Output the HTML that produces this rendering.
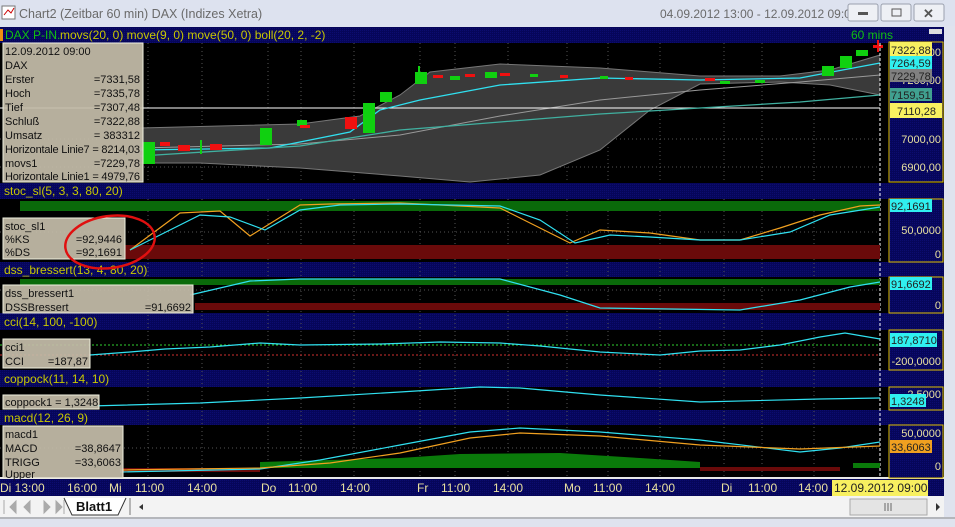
<!DOCTYPE html>
<html><head><meta charset="utf-8"><style>
body{margin:0;width:955px;height:527px;overflow:hidden;background:#dfe3ee;font-family:"Liberation Sans",sans-serif}
svg text{font-family:"Liberation Sans",sans-serif}
</style></head><body>
<svg width="955" height="527" xmlns="http://www.w3.org/2000/svg" style="position:absolute;left:0;top:0">
<defs>
<pattern id="nav" width="2" height="2" patternUnits="userSpaceOnUse"><rect width="2" height="2" fill="#06065a"/><rect width="1" height="1" fill="#0c0c70"/></pattern>
</defs>
<rect x="0" y="0" width="955" height="27" fill="#dde2ef"/>
<rect x="2" y="6" width="13" height="13" fill="#fff" stroke="#777"/>
<path d="M4 15 L8 10 L11 13 L14 8" stroke="#c00" fill="none"/>
<text x="19" y="18" font-size="12.5" fill="#6a6a6a">Chart2 (Zeitbar 60 min)  DAX (Indizes Xetra)</text>
<text x="660" y="18" font-size="12" fill="#6a6a6a">04.09.2012 13:00 - 12.09.2012 09:00</text>
<g fill="#eef0f5" stroke="#9aa0ae"><rect x="848" y="4" width="30" height="17" rx="2"/><rect x="881" y="4" width="30" height="17" rx="2"/><rect x="914" y="4" width="30" height="17" rx="2"/></g>
<rect x="858" y="12" width="10" height="3" fill="#555"/><rect x="892" y="9" width="9" height="7" fill="none" stroke="#555"/>
<text x="923" y="18" font-size="13" fill="#555" font-weight="bold">✕</text>
<rect x="944" y="26" width="11" height="501" fill="#dfe3ee"/>
<rect x="0" y="27" width="944" height="469" fill="#000"/>
<rect x="0" y="27" width="944" height="16" fill="url(#nav)"/>
<rect x="0" y="183" width="944" height="16" fill="url(#nav)"/>
<rect x="0" y="262" width="944" height="15" fill="url(#nav)"/>
<rect x="0" y="313" width="944" height="17" fill="url(#nav)"/>
<rect x="0" y="370" width="944" height="17" fill="url(#nav)"/>
<rect x="0" y="410" width="944" height="15" fill="url(#nav)"/>
<rect x="0" y="478" width="944" height="18" fill="url(#nav)"/>
<rect x="0" y="477" width="944" height="2" fill="#e8e8e8"/>
<g fill="url(#nav)" stroke="#e0c000">
<rect x="889" y="42" width="54" height="140"/>
<rect x="889" y="199" width="54" height="63"/>
<rect x="889" y="277" width="54" height="36"/>
<rect x="889" y="330" width="54" height="40"/>
<rect x="889" y="387" width="54" height="23"/>
<rect x="889" y="425" width="54" height="53"/>
</g>
<rect x="929" y="29" width="13" height="5" fill="#ddd"/>
<g stroke="#555" stroke-dasharray="1,3">
<path d="M148 43V183M202 43V183M268 43V183M301 43V183M354 43V183M420 43V183M455 43V183M508 43V183M567 43V183M608 43V183M660 43V183M724 43V183M762 43V183M814 43V183"/>
<path d="M148 199V478M202 199V478M268 199V478M301 199V478M354 199V478M420 199V478M455 199V478M508 199V478M567 199V478M608 199V478M660 199V478M724 199V478M762 199V478M814 199V478"/>
<path d="M0 139H880M0 167H880M0 232H880M0 448H880M0 290H880"/>
</g>
<path d="M140 128 L300 124 L360 116 L400 95 L430 72 L500 64 L600 68 L700 76 L780 76 L830 70 L880 55 L880 95 L830 85 L780 82 L700 84 L650 110 L600 150 L540 175 L470 182 L400 176 L300 168 L200 163 L140 163Z" fill="#3a3a3a"/>
<path d="M140 128 L300 124 L360 116 L400 95 L430 72 L500 64 L600 68 L700 76 L780 76 L830 70 L880 55" fill="none" stroke="#777"/>
<path d="M880 95 L830 85 L780 82 L700 84 L650 110 L600 150 L540 175 L470 182 L400 176 L300 168 L200 163 L140 163" fill="none" stroke="#777"/>
<path d="M140 148 L300 144 L400 135 L500 116 L600 100 L700 90 L800 82 L880 75" fill="none" stroke="#999"/>
<line x1="0" y1="108" x2="880" y2="108" stroke="#fff"/>
<path d="M140 150 L270 148 L350 132 L380 110 L420 100 L500 85 L600 78 L700 80 L800 78 L880 63" fill="none" stroke="#30e0f0" stroke-width="1.3"/>
<path d="M140 156 L300 146 L400 130 L500 122 L600 114 L700 108 L800 102 L880 95" fill="none" stroke="#40b0a0" stroke-width="1.3"/>
<g fill="#10d010">
<rect x="143" y="142" width="12" height="22"/><rect x="260" y="128" width="12" height="17"/><rect x="297" y="120" width="10" height="6"/><rect x="363" y="103" width="12" height="30"/><rect x="380" y="92" width="12" height="10"/><rect x="415" y="72" width="12" height="12"/><rect x="450" y="76" width="10" height="4"/><rect x="485" y="72" width="12" height="6"/><rect x="530" y="74" width="8" height="3"/><rect x="600" y="76" width="8" height="3"/><rect x="720" y="81" width="10" height="3"/><rect x="755" y="80" width="10" height="3"/><rect x="822" y="66" width="12" height="10"/><rect x="840" y="56" width="12" height="12"/><rect x="856" y="50" width="12" height="6"/>
<rect x="200" y="140" width="2" height="14"/><rect x="418" y="66" width="2" height="14"/>
</g>
<g fill="#f01010">
<rect x="160" y="142" width="10" height="4"/><rect x="178" y="145" width="12" height="6"/><rect x="210" y="144" width="12" height="6"/><rect x="345" y="117" width="12" height="12"/><rect x="300" y="125" width="10" height="3"/><rect x="433" y="75" width="10" height="3"/><rect x="465" y="74" width="10" height="3"/><rect x="500" y="73" width="10" height="3"/><rect x="560" y="75" width="8" height="3"/><rect x="625" y="77" width="8" height="3"/><rect x="705" y="78" width="10" height="3"/><rect x="873" y="45" width="10" height="3"/><rect x="877" y="40" width="2" height="12"/>
</g>
<line x1="880" y1="43" x2="880" y2="478" stroke="#fff" stroke-dasharray="3,2"/>
<rect x="0" y="29" width="3" height="12" fill="#f09010"/>
<text x="5" y="39" font-size="12" fill="#10c010">DAX P-IN.</text>
<text x="60" y="39" font-size="12" fill="#c8c800">movs(20, 0) move(9, 0) move(50, 0) boll(20, 2, -2)</text>
<text x="851" y="39" font-size="12" fill="#10c010">60 mins</text>
<g font-size="12" fill="#c8c800">
<text x="4" y="195">stoc_sl(5, 3, 3, 80, 20)</text>
<text x="4" y="274">dss_bressert(13, 4, 80, 20)</text>
<text x="4" y="326">cci(14, 100, -100)</text>
<text x="4" y="383">coppock(11, 14, 10)</text>
<text x="4" y="422">macd(12, 26, 9)</text>
</g>
<rect x="20" y="201" width="860" height="10" fill="#0a6a0a"/>
<rect x="125" y="245" width="755" height="14" fill="#6a0a0a"/>
<path d="M130 250 L180 213 L220 211 L250 236 L300 205 L330 204 L400 203 L500 208 L540 228 L570 243 L600 230 L650 233 L700 240 L740 240 L780 228 L820 215 L860 206 L880 205" fill="none" stroke="#f0a020" stroke-width="1.2"/>
<path d="M130 250 L160 235 L200 215 L230 217 L265 230 L300 210 L340 205 L400 204 L500 206 L540 220 L575 243 L610 235 L650 237 L700 240 L740 240 L790 232 L830 215 L880 207" fill="none" stroke="#30e0f0" stroke-width="1.2"/>
<rect x="20" y="279" width="860" height="6" fill="#0a6a0a"/>
<rect x="195" y="303" width="685" height="7" fill="#6a0a0a"/>
<path d="M190 295 L250 281 L300 279 L500 279 L560 295 L600 308 L740 310 L800 300 L850 287 L880 282" fill="none" stroke="#30e0f0" stroke-width="1.2"/>
<line x1="0" y1="345" x2="880" y2="345" stroke="#30d030" stroke-dasharray="2,2"/>
<line x1="0" y1="355" x2="880" y2="355" stroke="#d03030" stroke-dasharray="2,2"/>
<path d="M90 355 L130 352 L165 349 L210 347 L260 343 L300 345 L380 344 L440 342 L500 343 L540 346 L600 352 L660 355 L700 351 L740 350 L780 345 L820 337 L845 333 L880 339" fill="none" stroke="#30e0f0" stroke-width="1.2"/>
<path d="M90 406 L200 403 L300 398 L400 392 L480 387 L520 388 L600 395 L700 402 L820 399 L880 398" fill="none" stroke="#30e0f0" stroke-width="1.2"/>
<path d="M260 468 L260 462 L400 458 L460 454 L560 453 L640 458 L700 462 L700 468Z" fill="#0a7a0a"/>
<rect x="120" y="468" width="140" height="4" fill="#6a0a0a"/>
<rect x="700" y="467" width="140" height="4" fill="#6a0a0a"/>
<rect x="853" y="463" width="27" height="5" fill="#0a7a0a"/>
<path d="M120 472 L260 469 L320 460 L400 445 L470 432 L520 428 L600 432 L700 440 L800 452 L840 448 L880 442" fill="none" stroke="#30e0f0" stroke-width="1.2"/>
<path d="M120 470 L260 468 L330 463 L400 453 L470 438 L520 433 L600 436 L700 445 L800 449 L880 446" fill="none" stroke="#f0a020" stroke-width="1.2"/>
<g fill="#c4bca9" fill-opacity="0.93" stroke="#f0f0e0">
<rect x="3" y="43" width="140" height="139"/>
<rect x="3" y="218" width="122" height="41"/>
<rect x="3" y="285" width="190" height="28"/>
<rect x="3" y="339" width="87" height="29"/>
<rect x="3" y="395" width="96" height="14"/>
<rect x="3" y="426" width="120" height="52"/>
</g>
<g font-size="11" fill="#111">
<text x="5" y="55">12.09.2012   09:00</text><text x="5" y="69">DAX</text>
<text x="5" y="83">Erster</text><text x="140" y="83" text-anchor="end">=7331,58</text>
<text x="5" y="97">Hoch</text><text x="140" y="97" text-anchor="end">=7335,78</text>
<text x="5" y="111">Tief</text><text x="140" y="111" text-anchor="end">=7307,48</text>
<text x="5" y="125">Schluß</text><text x="140" y="125" text-anchor="end">=7322,88</text>
<text x="5" y="139">Umsatz</text><text x="140" y="139" text-anchor="end">=  383312</text>
<text x="5" y="153" textLength="135">Horizontale Linie7 = 8214,03</text>
<text x="5" y="167">movs1</text><text x="140" y="167" text-anchor="end">=7229,78</text>
<text x="5" y="180" textLength="135">Horizontale Linie1 = 4979,76</text>
<text x="5" y="230">stoc_sl1</text>
<text x="5" y="243">%KS</text><text x="122" y="243" text-anchor="end">=92,9446</text>
<text x="5" y="256">%DS</text><text x="122" y="256" text-anchor="end">=92,1691</text>
<text x="5" y="297">dss_bressert1</text>
<text x="5" y="311">DSSBressert</text><text x="191" y="311" text-anchor="end">=91,6692</text>
<text x="5" y="351">cci1</text>
<text x="5" y="365">CCI</text><text x="88" y="365" text-anchor="end">=187,87</text>
<text x="5" y="406">coppock1 = 1,3248</text>
<text x="5" y="438">macd1</text>
<text x="5" y="452">MACD</text><text x="121" y="452" text-anchor="end">=38,8647</text>
<text x="5" y="466">TRIGG</text><text x="121" y="466" text-anchor="end">=33,6063</text>
<text x="5" y="478">Upper</text>
</g>
<ellipse cx="110" cy="242" rx="45" ry="26" fill="none" stroke="#e01010" stroke-width="2.5" transform="rotate(-8 110 242)"/>
<g font-size="11" fill="#e8e0a0" text-anchor="end">
<text x="941" y="143">7000,00</text><text x="941" y="171">6900,00</text><text x="941" y="84">7200,00</text><text x="941" y="56">7300,00</text>
<text x="941" y="234">50,0000</text><text x="941" y="258">0</text><text x="941" y="309">0</text>
<text x="941" y="365">-200,0000</text><text x="941" y="470">0</text><text x="941" y="437">50,0000</text><text x="941" y="398">2,5000</text>
</g>
<g font-size="11">
<rect x="890" y="42" width="42" height="14" fill="#f8f060"/><text x="891" y="54" fill="#222">7322,88</text>
<rect x="890" y="56" width="42" height="13" fill="#30f0f0"/><text x="891" y="67" fill="#222">7264,59</text>
<rect x="890" y="69" width="42" height="13" fill="#808080"/><text x="891" y="80" fill="#222">7229,78</text>
<rect x="890" y="88" width="42" height="13" fill="#40a090"/><text x="891" y="99" fill="#222">7159,51</text>
<rect x="890" y="103" width="52" height="15" fill="#f8f060"/><text x="897" y="115" fill="#222">7110,28</text>
<rect x="890" y="199" width="42" height="13" fill="#30f0f0"/><text x="891" y="210" fill="#222">92,1691</text>
<rect x="890" y="277" width="42" height="13" fill="#30f0f0"/><text x="891" y="288" fill="#222">91,6692</text>
<rect x="890" y="333" width="47" height="14" fill="#30f0f0"/><text x="891" y="344" fill="#222">187,8710</text>
<rect x="890" y="394" width="36" height="13" fill="#30f0f0"/><text x="891" y="405" fill="#222">1,3248</text>
<rect x="890" y="440" width="42" height="13" fill="#f0a020"/><text x="891" y="451" fill="#222">33,6063</text>
</g>
<g font-size="12" fill="#e8e0a0">
<text x="0" y="492">Di 13:00</text><text x="67" y="492">16:00</text><text x="109" y="492">Mi</text><text x="135" y="492">11:00</text><text x="187" y="492">14:00</text>
<text x="261" y="492">Do</text><text x="288" y="492">11:00</text><text x="340" y="492">14:00</text><text x="417" y="492">Fr</text><text x="441" y="492">11:00</text><text x="493" y="492">14:00</text>
<text x="564" y="492">Mo</text><text x="593" y="492">11:00</text><text x="645" y="492">14:00</text><text x="721" y="492">Di</text><text x="748" y="492">11:00</text><text x="798" y="492">14:00</text>
</g>
<rect x="832" y="480" width="96" height="16" fill="#f8f060"/>
<text x="834" y="492" font-size="12" fill="#222">12.09.2012 09:00</text>
<rect x="0" y="496" width="944" height="21" fill="#f3f3f3"/>
<g fill="#aaa"><path d="M4 500v14M10 507l6-6v12zM24 507l6-6v12zM44 501v12l6-6zM56 501v12l6-6zM64 500v14" stroke="#aaa"/></g>
<path d="M64 498 L72 515 L118 515 L126 498" fill="#fff" stroke="#333"/>
<text x="76" y="511" font-size="13" font-weight="bold" fill="#111">Blatt1</text>
<line x1="130" y1="498" x2="130" y2="515" stroke="#777"/>
<path d="M139 507l4-3v6z" fill="#333"/>
<rect x="850" y="499" width="77" height="16" fill="#e4e4e4" stroke="#aaa"/>
<path d="M885 503v8M888 503v8M891 503v8" stroke="#666"/>
<path d="M936 503v8l4-4z" fill="#333"/>
<rect x="0" y="517" width="955" height="10" fill="#dfe3ee"/>
<line x1="0" y1="518" x2="955" y2="518" stroke="#888"/>
</svg>
</body></html>
